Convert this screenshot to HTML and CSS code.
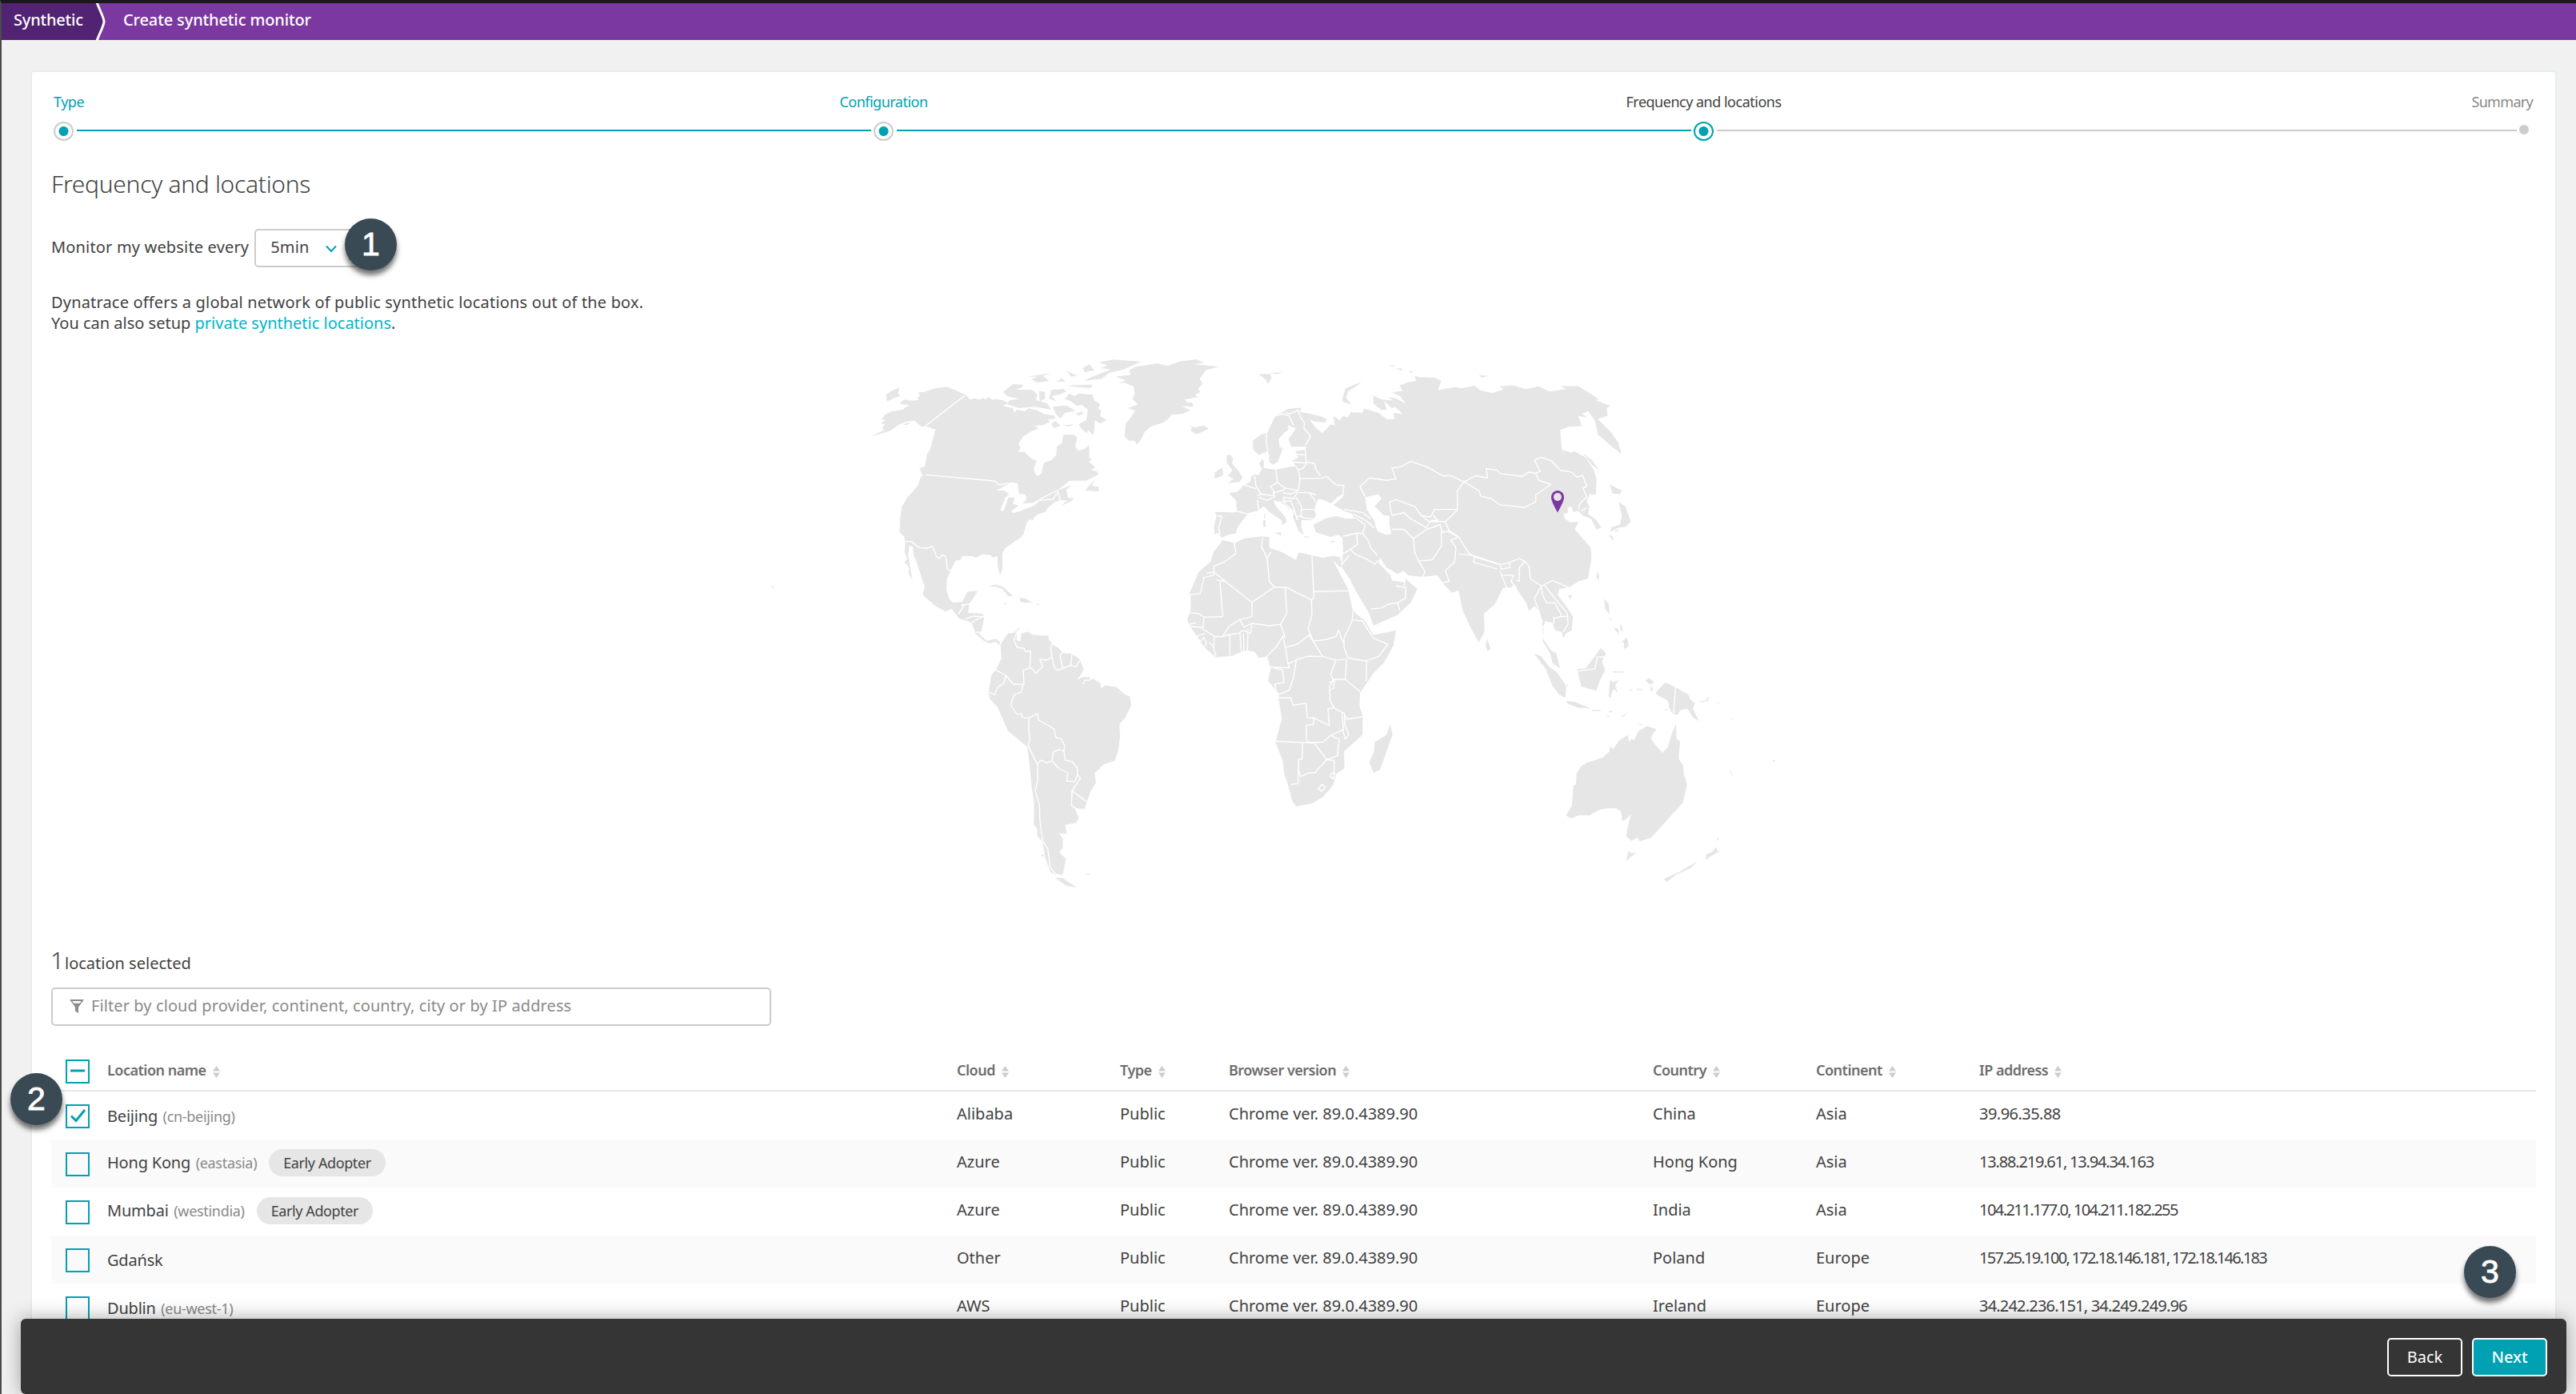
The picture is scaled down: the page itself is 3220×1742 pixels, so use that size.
FILE: index.html
```html
<!DOCTYPE html>
<html lang="en">
<head>
<meta charset="utf-8">
<title>Create synthetic monitor</title>
<link rel="stylesheet" href="styles.css">
</head>
<body>
<svg class="defs" width="0" height="0">
  <symbol id="sort" viewBox="0 0 9 15"><path d="M4.5 0 9 6.5H0zM4.5 15 9 8.5H0z"/></symbol>
</svg>

<header class="topbar">
  <a class="crumb crumb-root">Synthetic</a>
  <svg class="crumb-sep" width="14" height="46" viewBox="0 0 14 46"><path class="sep-fill" d="M0 0H2L11 23 2 46H0z"/><path class="sep-line" d="M1 -1C5 10 10 18 10 23S5 36 1 47"/></svg>
  <span class="crumb crumb-current">Create synthetic monitor</span>
</header>

<main class="page">
  <section class="card">
    <nav class="stepper">
      <div class="step-labels">
        <span class="done">Type</span><span class="done">Configuration</span><span class="now">Frequency and locations</span><span class="todo">Summary</span>
      </div>
      <div class="track">
        <i class="node"></i><i class="rail"></i><i class="node"></i><i class="rail"></i><i class="node node-now"></i><i class="rail rail-todo"></i><i class="dot"></i>
      </div>
    </nav>

    <h1 class="title">Frequency and locations</h1>
    <div class="frequency">
      <span class="frequency-label">Monitor my website every</span>
      <div class="select"><span>5min</span><svg width="14" height="10" viewBox="0 0 14 10"><path d="M1 1.5 7 8l6-6.5"/></svg></div>
    </div>
    <p class="intro">Dynatrace offers a global network of public synthetic locations out of the box.<br><span class="intro-more">You can also setup <a class="link">private synthetic locations</a>.</span></p>

    <svg class="map" width="1280" height="690" viewBox="0 0 1280 690">
      <g transform="scale(.38265 .33333)">
        <path class="land" d="M335,347 380,322 372,315 382,300 368,297 385,285 370,282 385,262 405,252 440,245 462,228 435,225 432,218 447,208 465,212 492,210 488,200 496,195 490,180 510,180 545,166 583,160 610,172 645,190 660,208 675,203 690,208 705,202 708,208 722,198 730,208 745,206 765,210 785,220 768,232 800,240 805,258 812,245 840,252 850,240 880,248 900,262 935,268 938,280 915,282 920,292 900,304 870,305 885,315 860,328 832,348 818,375 825,388 818,403 838,405 860,430 878,437 868,465 872,485 880,495 892,487 902,445 925,436 942,415 943,385 960,370 965,340 1000,340 1010,352 1003,385 1015,400 1035,392 1048,378 1050,400 1050,425 1058,432 1048,440 1070,462 1055,470 1078,480 1078,490 1040,512 985,512 960,535 945,550 975,535 990,532 975,545 980,575 1000,580 985,588 960,585 940,590 915,612 905,630 885,637 870,648 864,662 855,656 845,670 840,690 835,712 825,725 800,745 775,765 766,785 766,840 758,868 750,830 750,795 735,800 725,790 700,788 680,800 665,795 635,795 630,808 612,812 600,840 585,880 583,920 592,955 605,970 635,966 652,928 685,925 670,955 658,972 655,1008 700,1010 706,1024 698,1075 690,1085 700,1098 715,1112 735,1108 745,1104 758,1118 755,1130 745,1115 725,1122 705,1112 680,1088 665,1045 645,1035 625,1030 600,992 580,1003 545,980 505,940 512,910 500,870 485,815 475,790 474,762 462,755 458,790 465,840 472,885 460,862 460,835 446,818 455,805 446,780 448,742 445,722 430,705 432,650 437,612 455,575 490,530 498,500 510,490 495,465 512,460 520,410 530,395 532,370 540,340 545,320 515,310 500,308 480,288 460,288 430,300 400,325Z
        M385,190 405,175 430,163 425,185 432,195 408,205 388,215Z M440,303 470,288 455,303Z
        M970,205 985,185 1000,195 1015,185 1060,190 1065,210 1085,225 1078,240 1088,250 1085,270 1107,285 1085,298 1068,285 1066,320 1062,342 1045,320 1042,335 1022,315 1015,300 1040,285 1045,245 1025,228 1010,232 990,215Z
        M768,180 800,150 835,152 830,162 810,170 865,172 880,190 875,210 912,222 925,245 885,238 870,235 820,240 780,225 790,210 820,205 785,197Z
        M1080,68 1130,58 1220,66 1190,80 1160,95 1115,108 1090,130 1030,138 1060,122 1120,95 1085,90 1110,80Z M1028,90 1050,76 1066,98 1035,106Z M860,132 895,115 918,138 880,145Z M975,155 1060,152 1055,165 1000,160Z
        M885,175 905,180 905,205 888,215Z M925,172 965,168 975,178 950,190 925,195 945,215 918,205Z M930,235 975,230 1005,250 970,258 955,280 940,262Z M925,300 940,288 955,305 935,315Z M960,305 1000,300 985,308Z M975,97 988,108 1010,118 990,122Z M848,122 925,108 890,122Z M942,140 960,128 972,140Z M1005,262 1025,252 1030,262 1015,268Z
        M1135,122 1185,115 1180,98 1200,85 1240,78 1270,72 1305,82 1345,65 1400,57 1425,70 1390,75 1472,85 1430,98 1410,130 1420,150 1405,165 1412,180 1395,190 1405,198 1362,208 1370,220 1385,218 1390,235 1350,232 1380,248 1355,262 1318,265 1310,278 1290,295 1250,310 1230,330 1220,355 1205,378 1198,362 1178,362 1165,345 1168,300 1185,275 1200,250 1178,240 1208,225 1190,205 1198,185 1195,160 1165,145 1145,148 1170,135Z
        M1372,305 1385,312 1380,325 1400,338 1440,318 1425,305 1395,312Z
        M1035,550 1068,507 1058,532 1080,535 1080,552Z M960,605 970,592 1000,583 975,598Z
        M720,910 740,901 765,908 802,945 785,945 765,918 740,908Z M822,952 840,953 862,968 838,970 825,966Z M768,972h12v3h-12z M875,974h12v3h-12z M12,905 19,911 14,918Z M494,462 512,485 506,518 500,518 508,500Z"/>
        <path class="sea" d="M745,550 795,518 815,522 820,560 840,565 845,580 832,598 865,595 890,585 870,605 820,628 800,633 795,625 820,605 800,600 805,575 785,575 770,625 758,625 775,575 788,562 770,548Z M845,685 855,660 850,685Z"/>
        <path class="edge" d="M643,193 513,308 M515,490 740,513 755,528 795,520 M870,595 915,565 948,548 M888,586 930,582 948,555 955,588 M448,740 468,740 495,763 520,765 538,758 550,795 560,803 570,790 580,795 587,845 598,850 M622,1012 640,980 632,978 660,975 655,1005 M645,1030 672,1020 706,1022 M665,1045 685,1030 706,1022 M680,1080 698,1080 M515,310 545,322 530,385 520,382"/>
      </g>
      <g transform="translate(220 310) scale(.33333)">
        <path class="land" d="M212,195 240,155 262,152 285,130 275,150 272,180 286,185 290,155 315,148 330,160 370,163 392,162 392,180 402,185 405,195 430,210 445,228 478,230 510,252 524,290 510,315 498,330 520,318 545,318 548,330 560,325 588,342 588,360 605,350 645,355 680,385 697,390 702,425 680,470 658,495 660,545 652,600 640,632 600,645 565,678 570,715 550,745 535,790 528,812 490,810 505,845 495,865 455,872 460,905 432,905 446,925 445,960 432,975 458,1000 445,1060 415,1060 400,1050 388,1020 378,990 370,935 350,915 350,890 337,870 338,790 330,740 320,640 312,580 240,520 200,430 172,400 167,375 178,310 195,290 215,250Z M415,1070 445,1072 465,1085 498,1106 460,1102 430,1080Z M533,1056h15v3h-15z M364,985h10v6h-8z"/>
        <path class="edge" d="M275,145 262,180 275,208 300,210 305,222 325,220 322,280 345,303 370,280 360,252 385,255 405,245 400,205 412,190 M405,245 415,285 425,293 445,285 435,235 445,228 M445,285 475,275 480,232 M475,275 495,280 512,252 M322,285 297,292 300,345 260,345 232,312 195,292 M232,312 225,340 200,358 190,385 170,375 M297,345 290,375 262,385 250,425 275,458 290,455 295,470 318,472 318,520 322,550 315,575 M318,472 350,455 355,480 412,512 420,545 440,550 452,575 450,595 M315,575 350,645 365,630 385,640 405,632 410,600 430,590 450,595 455,630 480,635 500,660 500,690 490,710 460,708 465,678 430,660 405,632 M500,683 512,698 480,745 535,785 M480,745 478,800 495,812 M350,640 352,705 342,745 358,800 360,860 370,930 390,965 398,1030 415,1055 445,1065 M520,345 530,330 545,330"/>
      </g>
      <g transform="translate(480) scale(.33333 .38265)">
        <path class="land" d="M262,632 248,620 235,620 232,600 242,560 235,548 310,550 318,545 315,510 288,486 320,482 345,460 368,450 372,432 385,425 400,428 412,408 402,390 415,375 420,385 418,405 465,410 520,400 540,400 525,380 548,372 538,350 575,345 580,335 522,335 512,310 540,275 510,265 512,280 495,290 475,310 478,335 490,342 472,385 452,393 440,385 435,350 400,362 380,345 378,315 410,295 430,290 460,235 510,212 560,208 555,222 580,225 630,235 655,245 648,257 610,252 590,245 615,275 640,290 670,262 685,265 680,235 705,248 715,235 735,240 745,222 790,225 795,210 850,225 880,245 910,245 905,225 940,228 912,205 900,210 870,185 880,215 860,215 830,195 830,168 860,180 905,185 885,172 915,178 952,195 930,170 900,158 940,152 928,135 960,125 990,120 985,103 1000,108 1060,110 1085,120 1072,150 1140,140 1160,145 1210,135 1230,150 1275,160 1320,148 1320,790 1285,850 1245,880 1247,940 1225,975 1200,935 1165,870 1150,805 1125,812 1100,790 1070,755 1010,760 960,755 945,740 920,750 880,730 855,698 850,715 895,755 900,772 945,778 950,765 995,800 970,845 920,885 830,920 815,880 770,815 740,765 705,720 712,690 715,635 700,622 670,630 615,615 605,590 650,570 690,562 725,570 760,570 750,555 720,545 680,525 690,518 715,500 720,488 695,500 672,520 640,508 625,505 615,520 610,540 615,560 600,575 560,575 560,600 570,625 550,610 530,570 525,545 480,515 455,510 465,530 500,565 505,580 490,590 485,575 440,548 420,530 395,545 360,552 345,570 320,600 315,618 290,622Z
        M265,640 310,650 345,635 410,628 440,630 440,665 490,680 540,705 550,680 600,690 640,698 680,692 705,695 708,730 680,708 735,800 750,860 765,880 800,905 830,950 915,935 905,985 870,1040 830,1075 780,1140 778,1180 790,1215 790,1275 720,1330 722,1385 690,1405 680,1440 640,1480 600,1500 540,1510 525,1490 510,1440 495,1400 490,1360 463,1300 487,1225 475,1160 475,1140 435,1100 445,1060 432,1020 400,1025 385,1005 350,1000 300,1018 240,1023 195,990 170,955 145,925 132,900 145,870 145,820 140,815 175,745 220,710 230,680Z
        M893,1240 902,1275 855,1390 830,1400 815,1365 833,1330 835,1300 880,1275Z
        M280,362 295,362 305,375 300,390 325,415 340,435 328,450 285,455 305,440 285,430 302,412 280,388Z M235,420 262,403 268,428 235,440Z M400,98 445,98 448,110 436,130 425,115Z M440,95 492,92 470,98Z M712,185 725,145 785,123 770,135 735,155 728,175 748,197 720,190Z M890,68 910,70 905,75Z M910,80 940,80 935,86Z M960,88 985,90 968,94Z M1225,103 1258,104 1240,110Z M460,615h25l-2,10z M416,575h10v22h-8z M420,555h4v14h-4z M570,628h18v3h-18z M670,642h14v5h-12z"/>
        <path class="sea" d="M800,500 850,490 860,505 835,530 870,560 890,560 890,590 898,620 875,622 845,610 832,575 805,540Z"/>
        <path class="edge" d="M432,350 440,370 M430,290 428,320 435,350 M430,290 460,235 490,228 515,235 530,265 M500,222 515,228 550,215 M548,215 555,235 572,258 570,275 595,300 575,330 M575,345 578,385 610,390 615,410 632,430 M550,440 635,438 655,432 690,460 720,462 715,490 M522,385 578,388 M540,360 575,362 M545,412 568,405 580,388 M540,400 550,415 555,440 548,478 500,470 470,452 465,410 M385,430 390,465 410,490 395,495 M410,490 455,495 460,485 445,465 470,452 M345,460 390,472 M395,510 400,540 M400,500 430,510 460,500 455,485 490,478 500,470 M490,485 520,490 548,478 M490,500 530,505 545,485 590,485 615,515 M540,500 560,530 560,540 610,540 M495,500 495,520 530,545 530,560 M520,510 535,545 545,575 M485,515 520,512 M560,540 560,565 605,572 M540,565 560,560 M590,485 615,492 M315,545 360,555 M245,562 262,562 250,600 255,620 240,620
        M715,628 765,618 790,618 800,590 760,565 M720,540 790,550 820,570 M755,555 800,575 835,600 M790,618 810,640 820,665 845,690 M768,618 770,655 735,675 715,685 M745,670 760,685 800,700 835,718 850,705 M715,655 712,720 740,690
        M820,865 860,862 885,850 920,845 950,830 952,795 915,790 M920,845 930,870 M945,790 950,765
        M800,500 780,465 815,437 880,445 915,440 900,405 935,400 970,383 1030,400 1090,430 1120,430 1170,450 1145,480 1145,540 M890,515 915,508 985,530 1010,560 1045,565 1060,540 1145,540 M890,515 900,560 945,550 970,570 1030,600 1040,580 1010,560 M900,605 945,605 980,635 1030,605 1080,590 1090,615 1110,612 M980,635 985,680 1000,708 1050,705 1085,660 1085,610 M1000,708 1025,745 1012,760 M1110,612 1150,630 1120,640 1140,665 1135,710 1100,740 1115,775 1095,778 M1045,575 1100,580 1115,610 1150,630 1185,680 1210,695 1320,725 M1210,695 1205,712 1315,740 M1100,580 1145,542 M1030,600 1040,580 1075,580 1055,560"/>
        <path class="edge" d="M308,650 315,683 270,712 232,725 232,755 195,762 180,815 140,818 M232,745 370,840 375,843 460,793 440,775 432,700 410,660 415,630 M205,748 232,745 M255,775 265,890 195,892 175,880 145,877 M240,770 272,775 M432,700 445,680 M460,793 500,795 M500,793 598,835 607,830 600,690 M607,808 740,806 M500,793 505,880 482,915 M375,843 375,890 330,900 345,925 375,912 440,920 482,915 500,960 M330,900 290,920 265,955 292,948 325,945 342,935 370,945 375,912 M598,835 600,885 585,930 605,970 M490,950 500,990 545,980 590,950 640,1020 M500,990 510,1045 545,1030 580,1020 640,1020 M605,970 650,965 690,955 700,935 710,960 720,980 M640,1020 690,1032 730,1030 M755,865 750,905 720,960 720,990 735,1025 800,1035 850,1020 885,980 830,960 815,940 790,905 750,900 M805,1035 803,1100 M690,1030 670,1080 680,1095 725,1095 730,1030 M725,1095 780,1135 M680,1095 665,1120 668,1165 685,1190 720,1205 730,1225 790,1217 M665,1105 685,1100 680,1125 668,1130 M542,1030 530,1090 515,1130 475,1145 M475,1155 520,1155 530,1180 578,1172 582,1220 605,1220 665,1245 660,1190 685,1188 M440,1055 515,1057 510,1040 M460,1058 490,1065 495,1105 460,1110 465,1135 M430,1020 470,985 490,955 M465,1297 580,1302 640,1300 670,1278 702,1290 695,1345 655,1357 M605,1220 605,1242 578,1245 580,1295 600,1305 M670,1278 718,1258 712,1205 M722,1210 722,1240 738,1275 725,1290 715,1260 M565,1305 563,1355 550,1355 548,1435 520,1438 M550,1392 557,1412 590,1400 610,1400 655,1357 610,1305 M655,1357 683,1360 683,1405 M622,1452 638,1438 650,1448 635,1460Z M672,1402 685,1402 680,1420 668,1412Z
        M140,922 190,925 M140,915 165,910 M195,892 190,930 235,955 265,955 M235,955 230,990 240,1020 M165,955 200,945 M178,975 195,958 205,980 190,992 M292,950 292,1015 M330,945 335,1005 M343,945 345,1000 M360,930 358,1000 M235,990 215,975"/>
      </g>
      <g transform="translate(760) scale(.34439 .38265)">
        <path class="land" d="M440,157 465,150 450,137 500,135 545,147 590,138 630,155 690,147 670,137 735,137 810,180 795,183 852,202 838,208 840,235 805,245 850,285 878,320 892,360 850,330 805,295 795,250 770,218 748,228 768,240 735,235 747,268 700,270 668,280 675,345 710,355 720,350 760,370 790,410 800,440 798,492 775,490 765,515 775,530 770,555 800,575 818,600 800,605 780,570 750,560 735,545 715,548 710,530 695,535 698,550 680,555 685,570 705,582 735,580 722,605 760,645 780,665 782,700 770,765 735,775 705,793 665,800 660,820 690,855 715,890 710,935 690,945 680,962 675,940 650,935 640,910 615,905 605,925 605,960 635,1000 655,1010 668,1060 640,1040 632,1010 605,970 608,930 590,870 575,855 555,872 545,845 515,805 500,785 490,795 470,795 450,800 440,815Z
        M402,962 417,995 405,1003 398,985Z M573,1010 600,1020 630,1055 655,1070 690,1115 688,1155 665,1145 640,1115 615,1060Z M690,1165 720,1168 780,1190 735,1188 695,1175Z M730,1062 760,1060 785,1030 815,993 835,1010 820,1035 832,1065 812,1100 800,1132 770,1125 745,1118Z M850,1095 860,1105 880,1097 868,1115 878,1140 862,1125 850,1155 845,1150Z M828,832 845,848 848,882 832,865Z M890,975 910,958 918,985 900,997 900,975Z M890,912 897,942 885,930Z M862,925 880,930 880,948Z M845,890 860,905 848,898Z M803,742 810,755 808,775 800,760Z M697,822 712,818 705,833Z M880,515 905,530 925,580 905,597 880,600 850,612 855,598 885,590 893,560Z M848,458 893,478 885,490 858,488Z M843,622 860,628 862,644Z M865,610 883,603 876,613Z M748,353 785,380 812,412 785,395Z M978,1098 992,1090 1010,1105 995,1112Z M998,1115 1008,1130 995,1130Z M1015,1138 1050,1105 1085,1120 1135,1145 1140,1160 1158,1172 1150,1190 1172,1230 1150,1220 1130,1190 1105,1195 1095,1210 1078,1210 1065,1190 1060,1165 1020,1145Z M1170,1165 1195,1165 1210,1150 1205,1165 1185,1170Z M885,1218 915,1203 900,1215Z M860,1069h40v4h-40z M835,1212 849,1220 840,1210Z M785,1194h30v4h-30z M845,1198h14v4h-14z M920,1128h10v4h-10z M945,1126h24v3h-24z M1283,1388 1297,1413 1288,1405Z M1440,1360 1450,1356 1446,1364Z M1238,1168 1250,1180 1243,1176Z M690,1105 700,1118 694,1116Z M955,1242h10v3h-10z M1048,1195 1058,1188 1052,1198Z M372,102 405,104 388,109Z M1288,1223h6v3h-6z"/>
        <path class="edge" d="M320,450 360,430 405,437 400,407 440,412 450,423 530,432 555,418 580,422 595,415 575,378 600,370 635,380 670,412 710,418 730,435 750,428 765,465 752,470 765,500 740,520 735,540 M320,450 375,480 380,497 415,503 450,525 540,533 580,515 580,492 635,458 590,445 580,422 M300,685 350,690 M350,690 450,720 480,715 520,700 540,710 555,725 560,765 600,790 640,772 700,795 M450,720 455,735 485,730 485,715 M450,740 460,765 475,795 M455,755 500,755 490,775 510,795 M540,710 520,730 520,775 510,770 M600,790 575,830 590,870 605,910 M600,790 605,820 620,845 650,845 675,890 645,895 645,915 M610,785 640,820 695,880 697,915 680,940 M675,890 695,890 M733,1068 795,1060 803,1022 828,1022 M1087,1120 1080,1210 M745,545 765,535"/>
      </g>
      <g transform="translate(980 390) scale(.33333)">
        <path class="land" d="M465,252 467,310 480,318 475,385 492,410 494,445 500,455 506,485 490,550 440,605 372,680 328,694 320,680 298,692 278,675 285,635 292,610 297,593 275,612 262,618 260,585 240,570 210,570 180,575 140,597 100,597 72,608 52,597 75,560 80,485 90,480 92,440 110,412 130,400 190,380 215,358 217,338 230,348 250,318 285,295 288,320 300,310 308,315 325,280 345,270 355,262 392,274 378,290 372,310 390,335 415,362 435,340 448,295Z M288,728 296,737 315,737 278,768Z M420,835 480,808 545,768 520,795 465,820 430,847Z M558,778 576,765 578,745 605,730 615,715 620,730 632,728 595,750Z M618,690 626,678 624,690Z"/>
      </g>
      <g class="pin" transform="translate(979 183)"><path fill-rule="evenodd" d="M8 0a8 8 0 0 1 8 8.500C16 13 11.500 21 8 27.500 4.500 21 0 13 0 8.500A8 8 0 0 1 8 0z"/><circle cx="8" cy="8" r="5"/></g>
    </svg>

    <p class="count"><span class="count-number">1</span><span class="count-text">location selected</span></p>
    <label class="filter">
      <svg width="18" height="17" viewBox="0 0 18 17"><path fill-rule="evenodd" d="M0 0H18L11 9.500V17L7 14.500V9.500zM3.200 2 5.300 4.800H12.700L14.800 2z"/></svg>
      <span>Filter by cloud provider, continent, country, city or by IP address</span>
    </label>

    <div class="table">
      <div class="row head">
        <div class="check"><i class="box"><svg viewBox="0 0 26 26"><path d="M4 12h18"/></svg></i></div>
        <div>Location name<svg class="sort"><use href="#sort"/></svg></div><div>Cloud<svg class="sort"><use href="#sort"/></svg></div><div>Type<svg class="sort"><use href="#sort"/></svg></div><div>Browser version<svg class="sort"><use href="#sort"/></svg></div><div>Country<svg class="sort"><use href="#sort"/></svg></div><div>Continent<svg class="sort"><use href="#sort"/></svg></div><div>IP address<svg class="sort"><use href="#sort"/></svg></div>
      </div>
      <div class="row">
        <div class="check"><i class="box"><svg viewBox="0 0 26 26"><path d="M5 12.500 11 18.500 22 5"/></svg></i></div>
        <div class="name">Beijing<small>(cn-beijing)</small></div><div>Alibaba</div><div>Public</div><div>Chrome ver. 89.0.4389.90</div><div>China</div><div>Asia</div><div class="ip ip-1">39.96.35.88</div>
      </div>
      <div class="row alt">
        <div class="check"><i class="box"></i></div>
        <div class="name tagged">Hong Kong<small>(eastasia)</small><span class="tag">Early Adopter</span></div><div>Azure</div><div>Public</div><div>Chrome ver. 89.0.4389.90</div><div>Hong Kong</div><div>Asia</div><div class="ip ip-2">13.88.219.61, 13.94.34.163</div>
      </div>
      <div class="row">
        <div class="check"><i class="box"></i></div>
        <div class="name tagged">Mumbai<small>(westindia)</small><span class="tag">Early Adopter</span></div><div>Azure</div><div>Public</div><div>Chrome ver. 89.0.4389.90</div><div>India</div><div>Asia</div><div class="ip ip-3">104.211.177.0, 104.211.182.255</div>
      </div>
      <div class="row alt">
        <div class="check"><i class="box"></i></div>
        <div class="name">Gdańsk</div><div>Other</div><div>Public</div><div>Chrome ver. 89.0.4389.90</div><div>Poland</div><div>Europe</div><div class="ip ip-4">157.25.19.100, 172.18.146.181, 172.18.146.183</div>
      </div>
      <div class="row">
        <div class="check"><i class="box"></i></div>
        <div class="name">Dublin<small>(eu-west-1)</small></div><div>AWS</div><div>Public</div><div>Chrome ver. 89.0.4389.90</div><div>Ireland</div><div>Europe</div><div class="ip ip-5">34.242.236.151, 34.249.249.96</div>
      </div>
    </div>
  </section>
</main>

<footer class="actions">
  <button class="btn">Back</button>
  <button class="btn btn-primary">Next</button>
</footer>

<span class="callout callout-1">1</span>
<span class="callout callout-2">2</span>
<span class="callout callout-3">3</span>
</body>
</html>
```
FILE: styles.css
```css
* { box-sizing: border-box; }

body {
  position: relative;
  display: flex;
  flex-direction: column;
  width: 3220px;
  height: 1742px;
  margin: 0;
  overflow: hidden;
  border-top: 4px solid #191919;
  border-left: 2px solid #4b4b4b;
  background: #f1f1f1;
  color: #414242;
  font: 20px/26px "Noto Sans", "Open Sans", sans-serif;
}
h1, p { margin: 0; }
.defs { position: absolute; }

/* Breadcrumb bar */
.topbar {
  display: flex;
  flex: none;
  height: 46px;
  background: #7c38a1;
  color: #fff;
  font-weight: 500;
}
.crumb { display: flex; align-items: center; padding-bottom: 5px; }
.crumb-root { width: 118px; padding-left: 15px; background: #522273; letter-spacing: -.2px; }
.crumb-current { padding-left: 20px; letter-spacing: -.13px; }
.sep-fill { fill: #522273; }
.sep-line { fill: none; stroke: #fff; stroke-width: 3; }

/* Card */
.page { flex: 1; min-height: 0; padding: 38px 24px 0 36px; }
.card {
  height: 1700px;
  padding: 24px 24px 0;
  border: 2px solid #e7eded;
  border-radius: 4px;
  background: #fff;
}

/* Stepper */
.stepper { margin: 0 4px 0 3px; }
.step-labels {
  display: grid;
  grid-template-columns: 525px 1025px 1025px 1fr;
  font-size: 18px;
  letter-spacing: -.5px;
  text-align: center;
}
.step-labels :first-child { text-align: left; }
.step-labels :last-child { text-align: right; letter-spacing: -.7px; }
.done { color: #00a1b2; }
.todo { color: #898989; }
.track { display: flex; align-items: center; gap: 3.5px; height: 24px; margin: 12px 5px 0 0; }
.node {
  flex: none;
  width: 25px;
  height: 24px;
  border: 2px solid #ccc;
  border-radius: 50%;
  background: radial-gradient(circle, #00a1b2 5.5px, transparent 6.5px);
}
.node-now { border-color: #00a1b2; }
.rail { flex: 993; height: 2px; margin-top: -2px; background: #00a1b2; }
.rail-todo { flex: 1000; background: #ccc; }
.dot { width: 12px; height: 12px; margin-top: -4px; border-radius: 50%; background: #ccc; }

/* Intro */
.title { margin-top: 34px; font-size: 30px; line-height: 40px; font-weight: 350; letter-spacing: -.3px; }
.frequency { display: flex; align-items: center; gap: 7px; height: 48px; margin-top: 36px; letter-spacing: .17px; }
.frequency-label, .select span { padding-bottom: 3px; }
.select {
  display: flex;
  align-items: center;
  gap: 20px;
  width: 130px;
  height: 48px;
  padding-left: 18px;
  border: 2px solid #ccc;
  border-radius: 5px;
}
.select svg { fill: none; stroke: #00a1b2; stroke-width: 2; margin-top: 2px; }
.intro { margin-top: 31px; letter-spacing: .17px; }
.intro-more { letter-spacing: 0; }
.link { color: #00b4cc; }

/* World map */
.map { display: block; margin: 13px 0 0 896px; overflow: visible; }
.land { fill: #e6e6e6; }
.sea { fill: #fff; }
.edge { fill: none; stroke: #fff; stroke-width: 1.4px; vector-effect: non-scaling-stroke; stroke-linejoin: round; }
.pin path { fill: #7c38a1; }
.pin circle { fill: #e6e6e6; }

/* Filter */
.count { display: flex; align-items: baseline; gap: 3px; height: 40px; margin-top: 60px; line-height: 40px; }
.count-number { font-size: 30px; font-weight: 350; width: 15px; margin-left: -1px; }
.filter {
  display: flex;
  align-items: center;
  gap: 9px;
  width: 900px;
  height: 48px;
  margin-top: 14px;
  padding: 0 0 2px 21px;
  border: 2px solid #ccc;
  border-radius: 5px;
  color: #8a8a8a;
  letter-spacing: .1px;
}
.filter svg { fill: #8a8a8a; }

/* Locations table */
.table { margin-top: 32px; }
.row {
  display: grid;
  grid-template-columns: 70px 1062px 204px 136px 530px 204px 204px 1fr;
  align-items: center;
  height: 60px;
}
.row > div { padding-bottom: 4px; }
.row > .check { padding: 2px 0 0 18px; }
.row > .name { display: flex; align-items: baseline; padding: 1px 0 0; letter-spacing: -.2px; }
.row > .tagged { padding: 0 0 3px; }
.alt { background: #fafafa; }
.head { height: 50px; border-bottom: 2px solid #e6e6e6; color: #6d6d6d; font-size: 18px; font-weight: 600; letter-spacing: -.5px; }
.head > div { padding-bottom: 2px; }
.sort { width: 9px; height: 15px; margin-left: 8px; vertical-align: -3px; fill: #ccc; }
.box { display: block; width: 30px; height: 30px; border: 2px solid #00a1b2; }
.box svg { display: block; width: 26px; height: 26px; fill: none; stroke: #00a1b2; stroke-width: 3; }
.name small { margin-left: 6.5px; color: #898989; font-size: 18px; letter-spacing: -.3px; }
.tag {
  height: 34px;
  margin-left: 15px;
  padding: 0 18px;
  border-radius: 17px;
  background: #e6e6e6;
  font-size: 18px;
  line-height: 34px;
  letter-spacing: -.4px;
}
.ip-1 { letter-spacing: -.53px; }
.ip-2 { letter-spacing: -1.18px; }
.ip-3 { letter-spacing: -1.55px; }
.ip-4 { letter-spacing: -1.7px; }
.ip-5 { letter-spacing: -.8px; }

/* Action bar */
.actions {
  position: absolute;
  left: 24px;
  right: 12px;
  bottom: 0;
  display: flex;
  justify-content: flex-end;
  gap: 12px;
  height: 94px;
  padding: 24px 24px 0;
  border-radius: 6px;
  background: #353535;
  box-shadow: 0 0 24px rgba(0, 0, 0, .35);
}
.btn {
  width: 94px;
  height: 48px;
  padding: 0;
  border: 2px solid #fff;
  border-radius: 5px;
  background: none;
  color: #fff;
  font: inherit;
}
.btn-primary { background: #00a1b2; font-weight: 500; }

/* Numbered callouts */
.callout {
  position: absolute;
  width: 65px;
  height: 65px;
  border-radius: 50%;
  background: #3a4a54;
  box-shadow: 0 6px 6px rgba(0, 0, 0, .55);
  color: #fff;
  font: 41px/65px "Liberation Sans", Arial, sans-serif;
  -webkit-text-stroke: .8px #fff;
  text-align: center;
}
.callout-1 { left: 429px; top: 269px; }
.callout-2 { left: 11px; top: 1337px; }
.callout-3 { left: 3078px; top: 1553px; }
```
